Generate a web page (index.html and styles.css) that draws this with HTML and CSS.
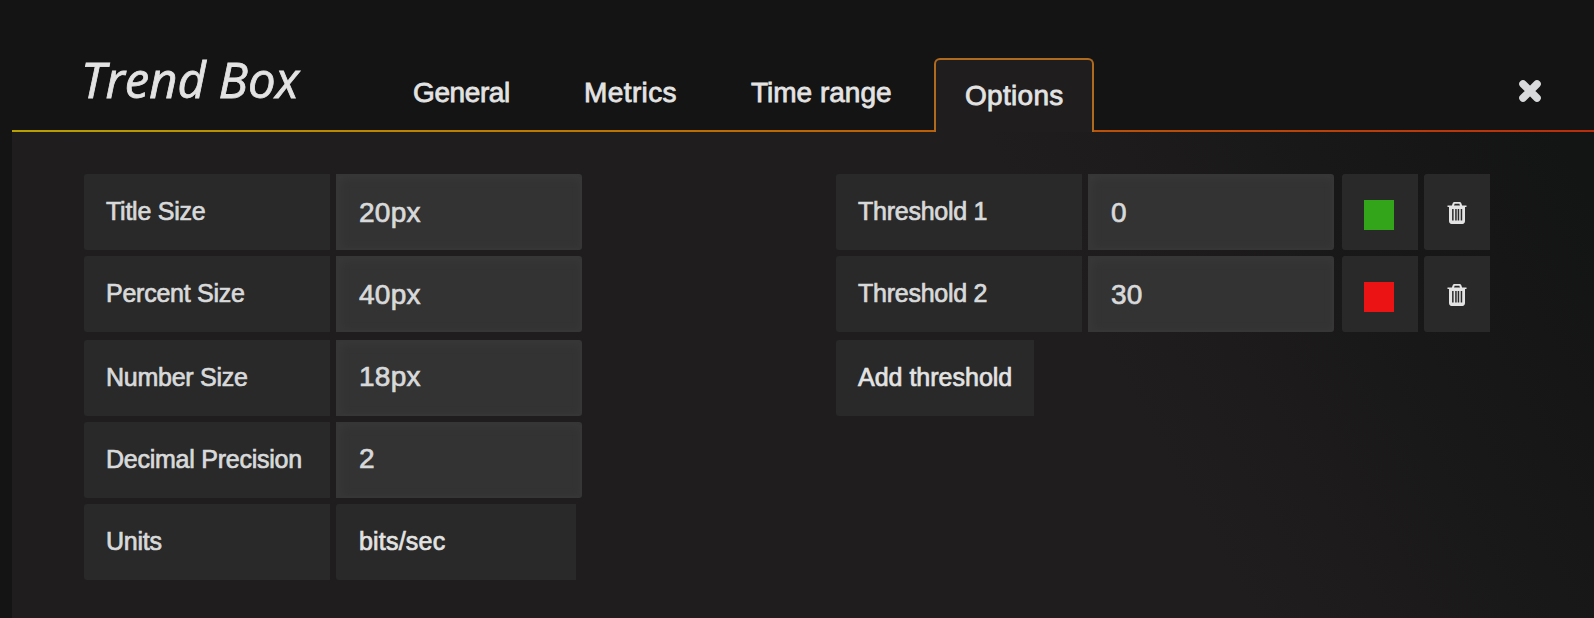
FILE: index.html
```
<!DOCTYPE html>
<html lang="en">
<head>
<meta charset="utf-8">
<title>Trend Box</title>
<link rel="stylesheet" href="styles.css">
</head>
<body>
<svg class="defs" width="0" height="0">
  <symbol id="trash" viewBox="0 0 20 22">
    <path fill-rule="evenodd" d="M7.500 0h5c1 0 1.500.6 1.800 1.300l.8 2.100H19.500v1.700H18v14c0 1.700-1 2.900-2.500 2.900h-11C3 22 2 20.800 2 19.100v-14H.5V3.400h4.400l.8-2.100C6 .6 6.500 0 7.500 0zM7.700 1.700L7 3.400h6l-.7-1.700zM5.100 7v11.500h1.500V7zM8.200 7v11.500h1.500V7zM10.700 7v11.500h1.500V7zM13.700 7v11.500h1.500V7z"/>
  </symbol>
</svg>
<header class="header">
  <h1 class="title">Trend Box</h1>
  <nav class="tabs">
    <a class="tab general">General</a>
    <a class="tab metrics">Metrics</a>
    <a class="tab range">Time range</a>
    <a class="tab active">Options</a>
  </nav>
  <svg class="close" viewBox="0 0 24 24"><path d="M5 5l14 14M19 5L5 19"/></svg>
</header>
<main class="panel">
  <section class="sizes">
    <div class="row"><div class="label">Title Size</div><div class="input low">20px</div></div>
    <div class="row"><div class="label">Percent Size</div><div class="input low">40px</div></div>
    <div class="row spaced"><div class="label">Number Size</div><div class="input">18px</div></div>
    <div class="row"><div class="label">Decimal Precision</div><div class="input">2</div></div>
    <div class="row"><div class="label">Units</div><div class="label unit bright">bits/sec</div></div>
  </section>
  <section class="thresholds">
    <div class="row"><div class="label">Threshold 1</div><div class="input low">0</div><div class="picker"><span class="swatch green"></span></div><div class="remove"><svg class="trash"><use href="#trash"/></svg></div></div>
    <div class="row"><div class="label">Threshold 2</div><div class="input low">30</div><div class="picker"><span class="swatch red"></span></div><div class="remove"><svg class="trash"><use href="#trash"/></svg></div></div>
    <div class="row spaced"><div class="label add bright">Add threshold</div></div>
  </section>
</main>
</body>
</html>
```
FILE: styles.css
```
* { box-sizing: border-box; }
body {
  margin: 0;
  height: 618px;
  overflow: hidden;
  background: #141414;
  color: #d8d9da;
  font-family: "Liberation Sans", Arial, sans-serif;
  padding-left: 12px;
  display: flex;
  flex-direction: column;
}
.defs { position: absolute; }
.header {
  display: flex;
  height: 132px;
  flex: none;
  padding-left: 69px;
  background: linear-gradient(to right, #b8a000, #bd7a00 33%, #bb5508 66%, #b92d0c) bottom / 100% 2px no-repeat;
}
.title {
  margin: 0;
  width: 305px;
  padding-top: 45px;
  font: italic 400 49px/68px "Open Sans", sans-serif;
  -webkit-text-stroke: 0.8px;
  color: #e3e3e3;
  white-space: nowrap;
}
.tabs {
  display: flex;
  flex: 1;
  color: #e3e3e3;
  font-size: 28px;
  line-height: 32px;
  letter-spacing: -0.4px;
  -webkit-text-stroke: 0.8px;
}
.tab { padding-top: 77px; margin-left: 27px; white-space: nowrap; }
.general { width: 144px; }
.metrics { width: 140px; letter-spacing: 0.4px; }
.range { width: 157px; letter-spacing: 0; }
.active {
  width: 160px;
  height: 74px;
  margin: 58px 0 0;
  padding: 20px 0 0 29px;
  letter-spacing: 0.3px;
  border: 2px solid #b06a20;
  border-bottom: 0;
  border-radius: 6px 6px 0 0;
  background: #201d1e;
}
.range + .active { margin-left: 26px; }
.close { width: 24px; height: 24px; margin: 79px 52px 0 0; fill: none; stroke: #d8d9da; stroke-width: 7.6; stroke-linecap: round; }
.panel {
  flex: 1;
  display: flex;
  padding: 42px 0 0 72px;
  background: linear-gradient(61deg, #201d1e 67%, #131414 98%);
}
.sizes { width: 752px; }
.sizes, .thresholds { display: flex; flex-direction: column; gap: 6px; }
.row { display: flex; gap: 6px; height: 76px; }
.spaced { margin-top: 2px; }
.label, .input {
  width: 246px;
  height: 76px;
  white-space: nowrap;
  -webkit-text-stroke: 0.7px;
}
.label {
  padding: 0 22px;
  font-size: 25px;
  line-height: 75px;
  letter-spacing: -0.25px;
  background: #292929;
  border-radius: 3px 0 0 3px;
}
.bright { color: #e3e3e3; letter-spacing: 0; }
.unit { width: 240px; padding-left: 23px; letter-spacing: 0.2px; }
.add { width: 198px; }
.input {
  padding-left: 21px;
  font-size: 28px;
  line-height: 70px;
  letter-spacing: 0.3px;
  border: 2px solid #363636;
  border-radius: 0 3px 3px 0;
  background: #333;
  box-shadow: inset 2px 2px 8px #393939;
}
.low { line-height: 74px; }
.picker {
  width: 76px;
  margin-left: 2px;
  padding: 26px 22px;
  background: #292929;
  border-radius: 3px 0 0 3px;
}
.swatch { display: block; width: 30px; height: 30px; }
.green { background: #33a51a; }
.red { background: #eb1313; }
.remove {
  width: 66px;
  padding: 28px 23px;
  background: #292929;
  border-radius: 3px 0 0 3px;
}
.trash { display: block; width: 20px; height: 22px; fill: #e3e3e3; }
```
